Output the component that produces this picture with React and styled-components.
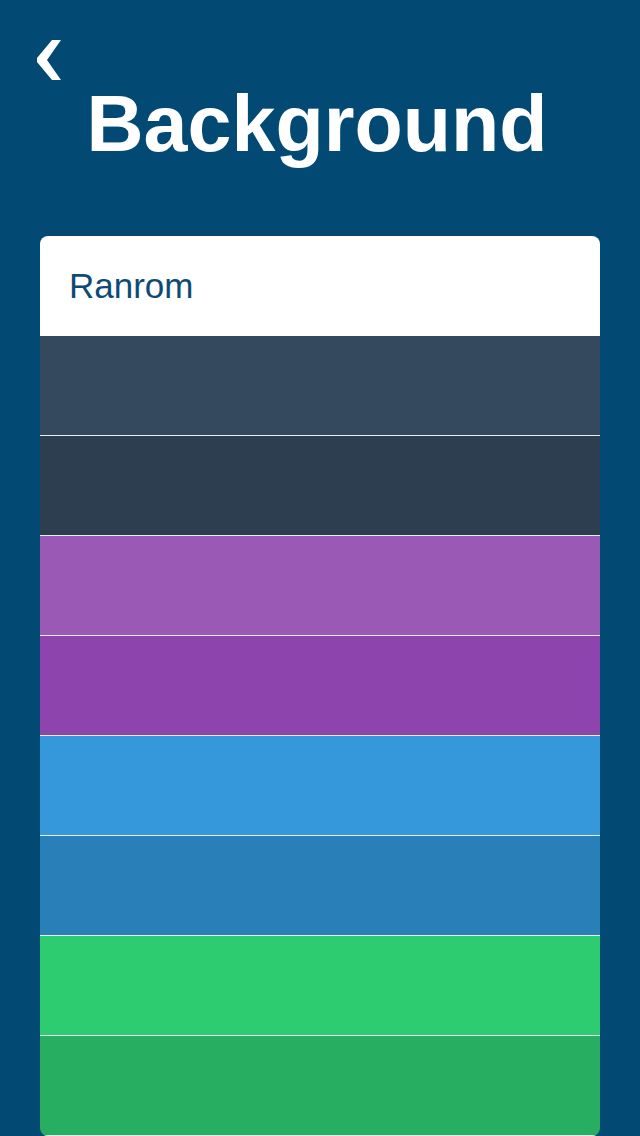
import React from "react";
import styled, { createGlobalStyle } from "styled-components";

const Global = createGlobalStyle`
  html, body { margin: 0; padding: 0; background: #024a74; }
  body { font-family: "Liberation Sans", Arial, sans-serif; }
`;

const Page = styled.div`
  width: 640px;
  min-height: 1136px;
  background: #024a74;
  display: flex;
  flex-direction: column;
`;

const Header = styled.header`
  display: flex;
  flex-direction: column;
  padding-top: 40px;
`;

const BackButton = styled.button`
  margin-left: 36px;
  width: 26px;
  height: 40px;
  padding: 0;
  border: none;
  background: transparent;
  cursor: pointer;
  display: block;
  svg { display: block; }
`;

const Title = styled.h1`
  margin: 4px 0 0;
  padding-right: 6px;
  text-align: center;
  font-size: 79px;
  line-height: 79px;
  font-weight: 700;
  color: #ffffff;
`;

const Card = styled.ul`
  list-style: none;
  margin: 73px 40px 0;
  padding: 0;
  border-radius: 8px;
  overflow: hidden;
`;

const Row = styled.li`
  height: ${(p) => (p.$first ? "100px" : "99px")};
  background: ${(p) => p.$color};
  border-bottom: ${(p) => (p.$first ? "none" : "1px solid #e6eef4")};
  display: flex;
  align-items: center;
  padding-left: 29px;
  box-sizing: content-box;
`;

const Label = styled.span`
  font-size: 35px;
  color: #0d4b76;
`;

const colors = [
  "#34495e",
  "#2c3e50",
  "#9b59b6",
  "#8e44ad",
  "#3498db",
  "#2980b9",
  "#2ecc71",
  "#27ae60",
];

export default function App() {
  return (
    <Page>
      <Global />
      <Header>
        <BackButton aria-label="Back">
          <svg width="26" height="40" viewBox="0 0 26 40">
            <polygon points="16,0 25,0 11,20 25,40 16,40 1,22 1,18" fill="#ffffff" />
          </svg>
        </BackButton>
        <Title>Background</Title>
      </Header>
      <Card>
        <Row $first $color="#ffffff">
          <Label>Ranrom</Label>
        </Row>
        {colors.map((c) => (
          <Row key={c} $color={c} />
        ))}
      </Card>
    </Page>
  );
}
